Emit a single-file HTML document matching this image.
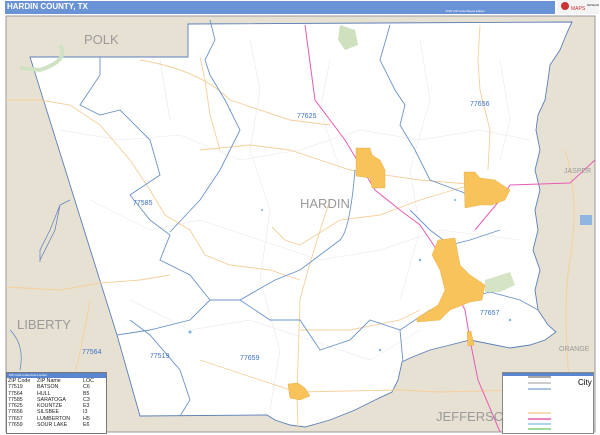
<!DOCTYPE html>
<html><head><meta charset="utf-8"><style>
html,body{margin:0;padding:0;width:600px;height:435px;overflow:hidden;background:#fff;font-family:"Liberation Sans",Arial,sans-serif}
.hdr{position:absolute;left:5px;top:1px;width:550px;height:13px;background:#6a93d6}
.hdr b{position:absolute;left:2px;top:1px;font-size:8px;color:#fff}
.hdr i{position:absolute;right:70px;top:8px;font-size:3px;color:#fff;font-style:normal}
.logo{position:absolute;left:557px;top:0;width:42px;height:14px;background:#f4f4f4}
svg{position:absolute;left:0;top:0}
.leg{position:absolute;left:6px;top:372px;width:99px;height:60px;background:#fff;border:1px solid #777;font-size:5.3px;line-height:6.3px;color:#222}
.leg .t{background:#5a86d0;color:#fff;height:5px;font-size:3px;line-height:5px;padding-left:2px}
.leg div.r{display:flex;padding-left:1px}
.leg span{display:inline-block}
.lg2{position:absolute;left:502px;top:372px;width:90px;height:60px;background:#fff;border:1px solid #888}
.lg2 .t{background:#5a86d0;height:3px}
</style></head><body>
<svg width="600" height="435" viewBox="0 0 600 435">
<rect x="0" y="0" width="600" height="435" fill="#fff"/>
<rect x="6" y="16" width="589" height="416" fill="#e7e1d3" stroke="#999" stroke-width="1"/>
<path d="M188,24 L572,22 L566,35 L560,50 L550,65 L548,80 L545,100 L538,115 L536,130 L540,150 L535,170 L540,190 L535,210 L538,230 L533,250 L540,270 L535,290 L538,310 L548,325 L556,332 L545,340 L530,345 L510,348 L490,344 L470,340 L450,345 L430,350 L410,358 L402,362 L398,380 L392,392 L375,400 L355,410 L330,420 L305,427 L290,425 L275,420 L267,415 L140,416 L117,335 L30,57 L188,57 Z" fill="#fff" stroke="#5b7fb8" stroke-width="0.9"/>
<g fill="none" stroke="#e6e6e6" stroke-width="0.5">
<path d="M60,130 L120,140 L180,135 L240,160 L300,150 L360,130 L420,140 L480,130 L530,140"/>
<path d="M90,200 L150,230 L200,220 L260,240 L320,260 L380,250 L440,230 L520,240"/>
<path d="M130,300 L190,330 L250,320 L310,340 L370,360 L420,330"/>
<path d="M250,40 L260,90 L250,150 L270,210 L260,280 L280,350 L270,410"/>
<path d="M420,40 L430,100 L410,170 L420,230 L400,300"/>
<path d="M160,60 L170,120 M330,60 L320,110 L340,170 M500,60 L510,120 L500,160"/>
</g>
<path d="M60,45 Q70,60 40,70 L20,68" fill="none" stroke="#cfe3c4" stroke-width="4"/>
<path d="M340,25 L355,30 L358,45 L345,50 L338,40Z" fill="#cfe0bf"/>
<g fill="none" stroke="#f5cf9a" stroke-width="0.9">
<path d="M6,100 L40,100 L70,105 L100,125 L130,160 L150,190 L165,215 L190,230 L205,255 L230,265 L270,270 L300,280"/>
<path d="M200,57 L205,80 L210,115 L220,150"/>
<path d="M6,287 L60,290 L100,283 L140,280 L170,275"/>
<path d="M200,150 L250,145 L290,150 L350,170 L420,180 L480,185"/>
<path d="M140,60 Q200,70 230,100 L290,120 L330,125"/>
<path d="M272,227 L285,240 L300,245 L340,220 L380,215 L420,200 L470,185"/>
<path d="M480,25 L478,60 L480,90 L490,130 L488,170"/>
<path d="M330,200 Q310,260 300,300 L297,392 L298,430"/>
<path d="M200,360 L260,380 L297,392 L400,390 L440,392 L520,390"/>
<path d="M90,300 Q80,360 60,432"/>
<path d="M300,330 L350,330 L400,320 L420,310"/>
<path d="M565,150 Q580,200 570,260 Q560,320 575,430"/>
</g>
<g fill="none" stroke="#6b93c8" stroke-width="0.9">
<path d="M100,57 L100,75 L90,90 L80,105 L100,115 L120,110 L150,140 L160,175 L130,195 L150,220 L170,235 L160,260 L190,275 L210,300"/>
<path d="M210,20 L215,40 L205,60 L210,75 L225,100 L240,130 L220,170 L200,200 L170,232"/>
<path d="M390,25 L380,60 L395,90 L405,105 L400,125 L415,150 L430,180 L470,195 L485,180"/>
<path d="M355,170 Q350,230 340,240 L320,255 L300,270 L275,280 L240,300 L210,300 L190,320 L150,330 L117,335"/>
<path d="M130,320 L150,335 L180,370 L190,400 L180,416"/>
<path d="M240,300 L270,320 L300,320 L320,350 L350,340 L370,320 L400,330 L403,362"/>
<path d="M400,330 L430,310 L460,300 L490,292 L520,300 L538,310"/>
<path d="M410,210 L430,230 L450,245 L470,240 L500,230"/>
</g>
<g fill="none" stroke="#5b7fb8" stroke-width="0.7">
<path d="M10,330 Q25,345 20,370 M6,400 L20,415 L30,432"/>
<path d="M40,262 L40,250 L50,230 L60,205 L70,200 M60,205 L55,230 L40,260"/>
</g>
<g fill="#7fb0e0">
<circle cx="190" cy="332" r="1.5"/><circle cx="230" cy="110" r="1"/><circle cx="420" cy="260" r="1.2"/><circle cx="380" cy="350" r="1.2"/><circle cx="510" cy="320" r="1.2"/><circle cx="262" cy="210" r="1"/><circle cx="455" cy="200" r="1"/>
</g>
<path d="M305,25 L315,100 L345,140 L375,190 L400,210 L420,225 L437,250 L450,280 L465,310 L470,340 L478,380 L495,420 L500,432" fill="none" stroke="#e85cb4" stroke-width="1"/>
<path d="M475,230 L500,200 L510,185 L570,183 L595,160" fill="none" stroke="#e85cb4" stroke-width="1"/>
<g fill="#f7c35a" stroke="#e6a63a" stroke-width="0.4">
<path d="M356,148 L370,148 L372,155 L380,160 L385,170 L385,188 L372,188 L370,178 L356,176Z"/>
<path d="M464,172 L475,172 L480,178 L495,180 L510,190 L505,200 L492,205 L480,205 L465,208Z"/>
<path d="M438,240 L455,238 L460,265 L470,275 L485,285 L482,300 L470,302 L450,310 L440,320 L417,322 L417,318 L438,305 L445,290 L440,270 L432,255Z"/>
<path d="M288,384 L298,383 L305,388 L310,396 L300,400 L290,398Z"/>
<path d="M467,332 L471,331 L474,345 L468,346Z"/>
</g>
<path d="M485,280 L510,272 L515,285 L500,292 L485,292Z" fill="#d6e4c6"/>
<path d="M580,215 L592,215 L592,225 L580,225Z" fill="#8fb5e0"/>
<g font-family="Liberation Sans,Arial,sans-serif" fill="#9a9a9a" font-size="13">
<text x="84" y="44">POLK</text>
<text x="17" y="329">LIBERTY</text>
<text x="436" y="421">JEFFERSON</text>
<text x="300" y="208" font-size="13">HARDIN</text>
<text x="559" y="351" font-size="7">ORANGE</text>
<text x="564" y="173" font-size="7">JASPER</text>
</g>
<g font-family="Liberation Sans,Arial,sans-serif" fill="#3d72c0" font-size="7">
<text x="297" y="118">77625</text>
<text x="470" y="106">77656</text>
<text x="133" y="205">77585</text>
<text x="82" y="354">77564</text>
<text x="150" y="358">77519</text>
<text x="240" y="360">77659</text>
<text x="480" y="315">77657</text>
</g>
<path d="M545,412 L550,419 L543,425 L550,427 L552,433 L554,427 L561,425 L554,419Z" fill="#111"/>
</svg>
<div class="hdr"><b>HARDIN COUNTY, TX</b><i>2020 ZIP Code Based Edition</i></div>
<div class="logo"><svg width="42" height="14"><circle cx="8" cy="6" r="4" fill="#c33"/><text x="14" y="10" font-size="5" fill="#c33" font-family="Liberation Sans">MAPS</text><text x="30" y="6" font-size="3" fill="#333">RESEARCH</text></svg></div>
<div class="leg"><div class="t">ZIP Code Index/Grid Locator</div>
<div class="r"><span style="width:29px">ZIP Code</span><span style="width:46px">ZIP Name</span><span>LOC</span></div>
<div class="r"><span style="width:29px">77519</span><span style="width:46px">BATSON</span><span>C6</span></div>
<div class="r"><span style="width:29px">77564</span><span style="width:46px">HULL</span><span>B5</span></div>
<div class="r"><span style="width:29px">77585</span><span style="width:46px">SARATOGA</span><span>C3</span></div>
<div class="r"><span style="width:29px">77625</span><span style="width:46px">KOUNTZE</span><span>E3</span></div>
<div class="r"><span style="width:29px">77656</span><span style="width:46px">SILSBEE</span><span>I3</span></div>
<div class="r"><span style="width:29px">77657</span><span style="width:46px">LUMBERTON</span><span>H5</span></div>
<div class="r"><span style="width:29px">77659</span><span style="width:46px">SOUR LAKE</span><span>E6</span></div>
</div>
<div class="lg2"><div class="t"></div>
<svg width="90" height="57"><g stroke-width="1.5" fill="none"><path d="M25,4 L48,4" stroke="#888"/><path d="M25,10 L48,10" stroke="#bbb"/><path d="M25,16 L48,16" stroke="#8fb0d8"/><path d="M25,40 L48,40" stroke="#f5cf9a"/><path d="M25,46 L48,46" stroke="#e85cb4"/><path d="M25,51 L48,51" stroke="#8fc6e8"/><path d="M25,56 L48,56" stroke="#7fd07f"/></g>
<text x="75" y="12" font-size="8" font-family="Liberation Sans">City</text></svg></div>
</body></html>
